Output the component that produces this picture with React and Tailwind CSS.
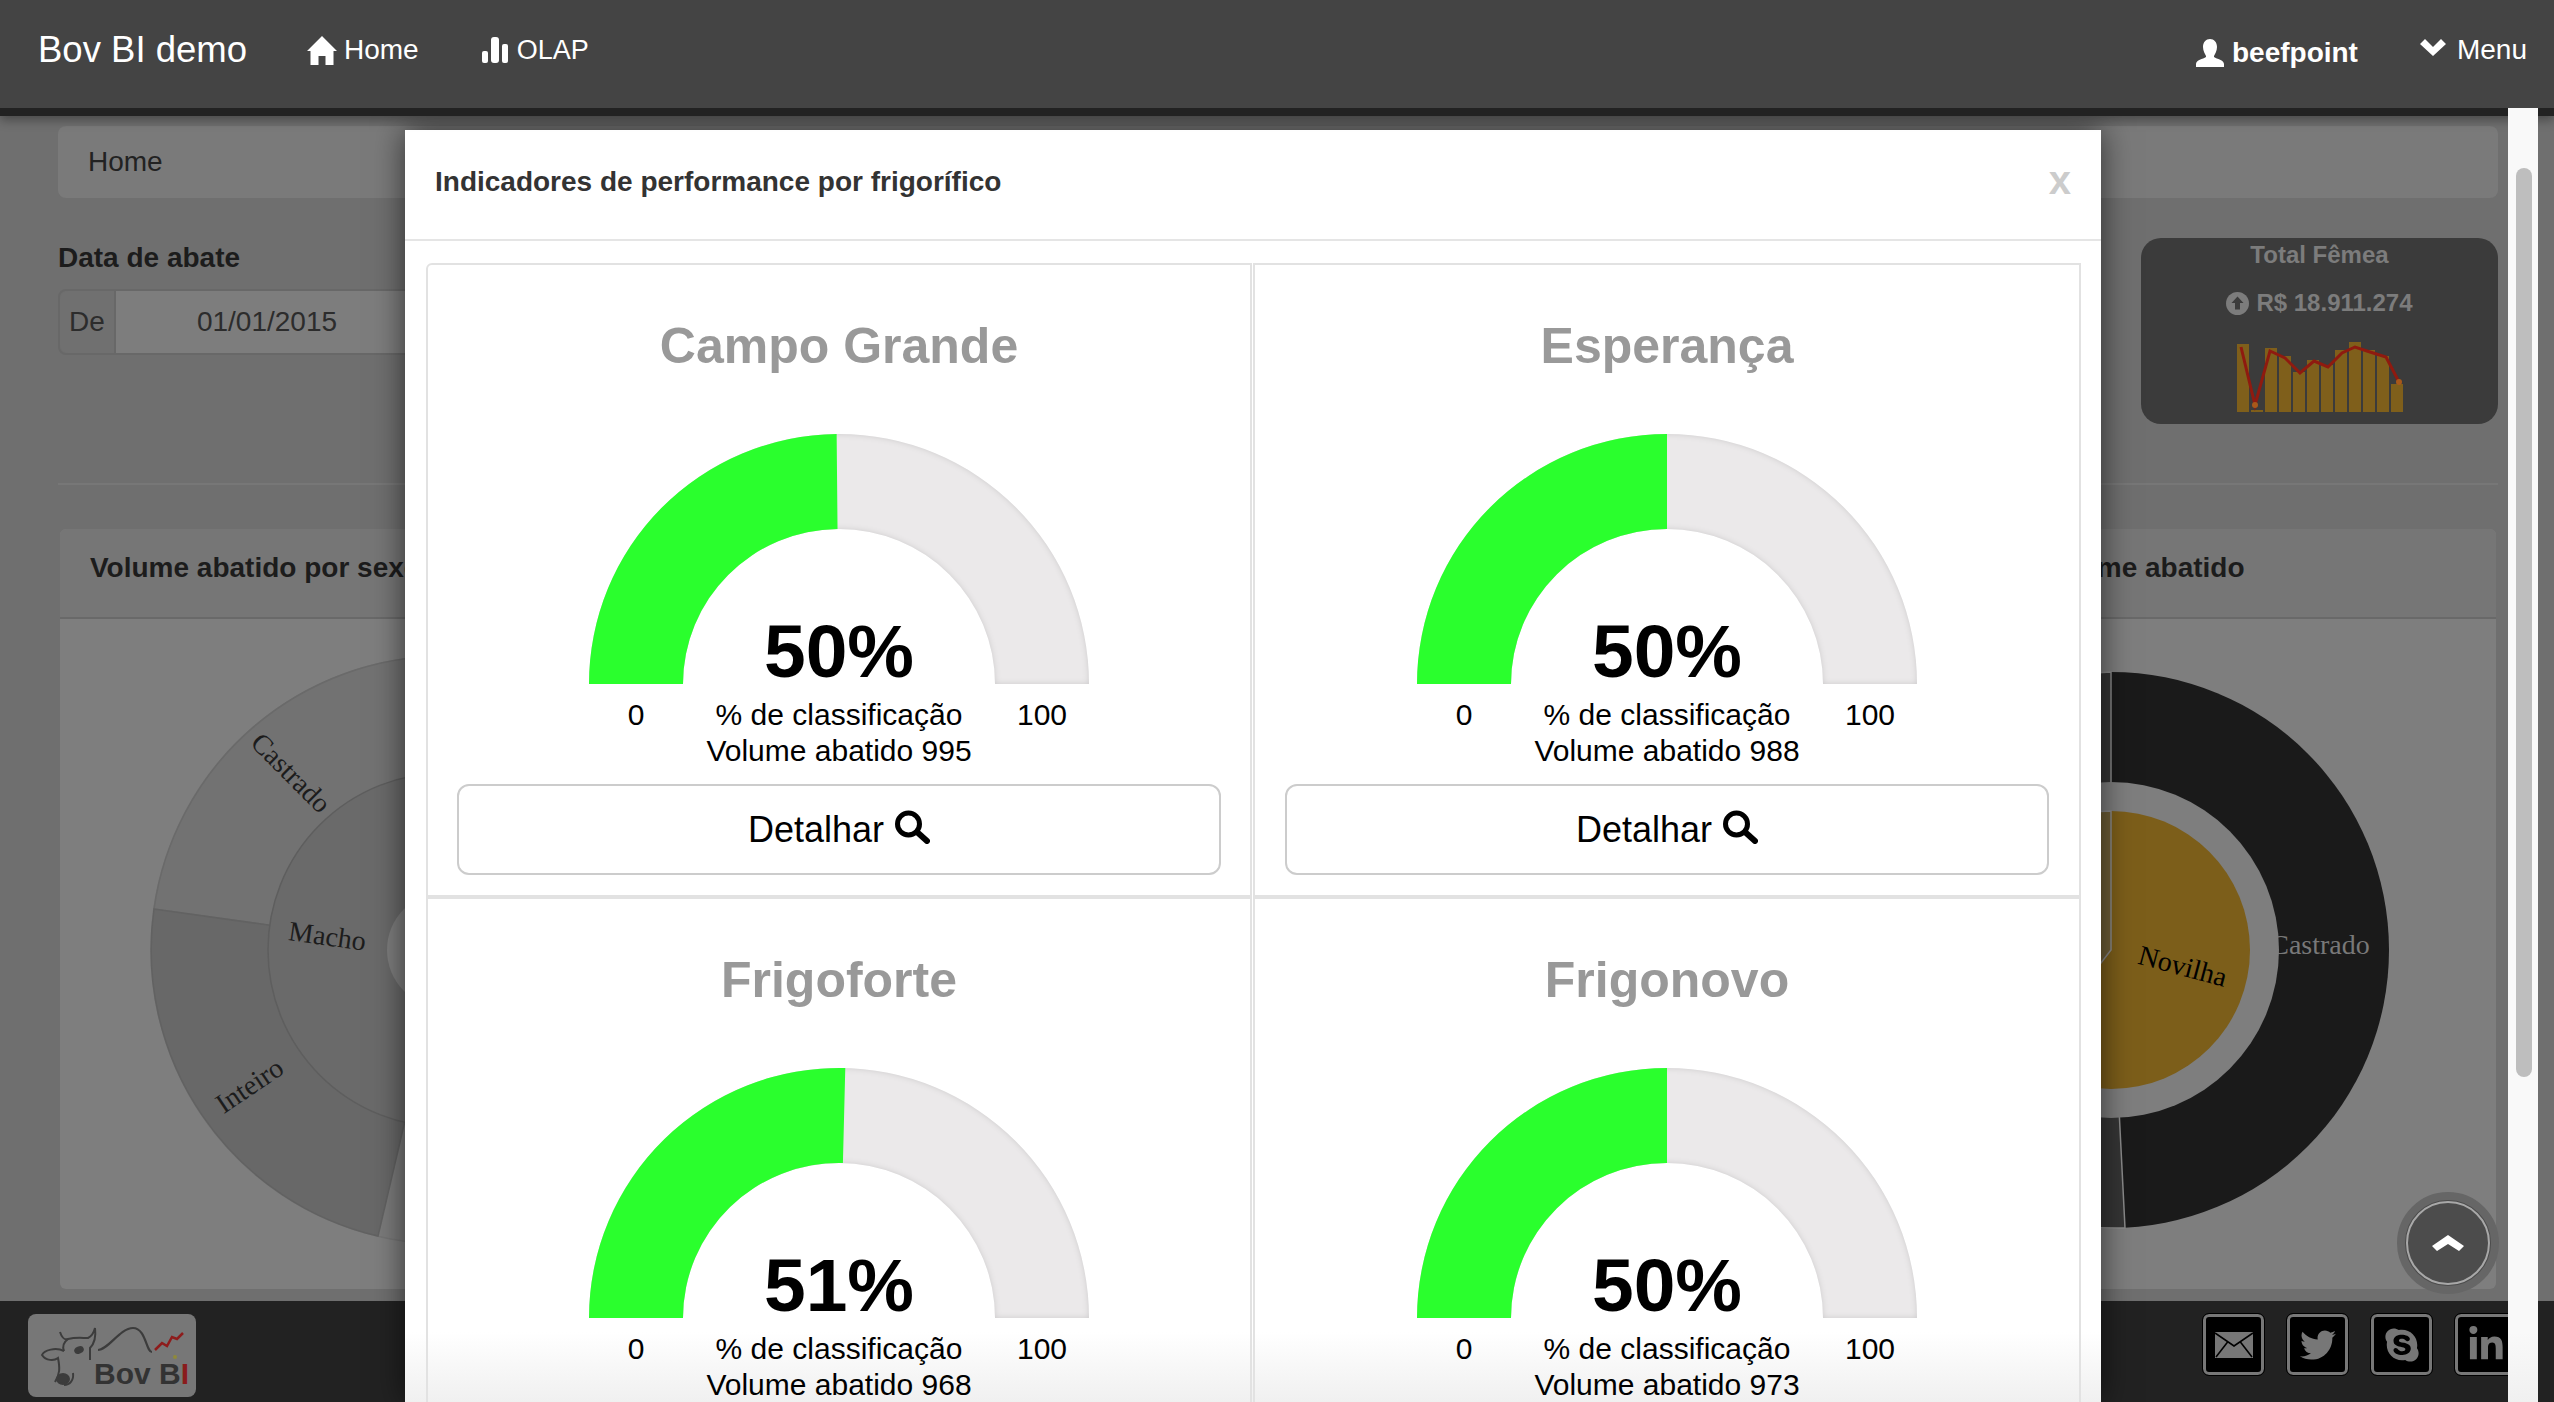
import React from 'react';
import { FaTwitter, FaSkype, FaLinkedinIn } from 'react-icons/fa';

const gauges = [
  { name: 'Campo Grande', label: '50%', value: 0.497, volume: 995 },
  { name: 'Esperança', label: '50%', value: 0.5, volume: 988 },
  { name: 'Frigoforte', label: '51%', value: 0.508, volume: 968 },
  { name: 'Frigonovo', label: '50%', value: 0.5, volume: 973 },
];

const bars = [344, 410, 348, 356, 372, 360, 365, 350, 342, 350, 356, 384];

const HomeIcon = () => (
  <svg width="30" height="29" viewBox="0 0 30 29" fill="#fff">
    <path d="M15 0L30 15L26.5 15L26.5 29L18.5 29L18.5 20L11.5 20L11.5 29L3.5 29L3.5 15L0 15Z" />
  </svg>
);

const StatsIcon = () => (
  <svg width="26" height="26" viewBox="0 0 26 26" fill="#fff">
    <rect x="0" y="14" width="6" height="12" rx="2" />
    <rect x="9" y="0" width="8" height="26" rx="3" />
    <rect x="20" y="7" width="6" height="19" rx="2" />
  </svg>
);

const UserIcon = () => (
  <svg width="28" height="28" viewBox="0 0 28 28" fill="#fff">
    <path d="M14 0c4 0 7 3 7 8 0 4-2 7-3 9v1c3 2 10 3 10 7v3H0v-3c0-4 7-5 10-7v-1c-1-2-3-5-3-9 0-5 3-8 7-8z" />
  </svg>
);

const SearchIcon = () => (
  <svg width="36" height="34" viewBox="0 0 36 34" fill="none" stroke="#000">
    <circle cx="14.5" cy="14" r="11" strokeWidth="5" />
    <path d="M23 22L33 31" strokeWidth="6" strokeLinecap="round" />
  </svg>
);

function Gauge({ id, value, label }) {
  const angle = Math.PI * (1 - value);
  const ox = 250 + 250 * Math.cos(angle);
  const oy = 250 - 250 * Math.sin(angle);
  const ix = 250 + 156 * Math.cos(angle);
  const iy = 250 - 155 * Math.sin(angle);
  return (
    <svg width="500" height="250" viewBox="0 0 500 250" className="block overflow-visible">
      <defs>
        <filter id={id} x="-5%" y="-5%" width="110%" height="110%">
          <feComponentTransfer in="SourceAlpha">
            <feFuncA type="table" tableValues="1 0" />
          </feComponentTransfer>
          <feGaussianBlur stdDeviation="3" result="blur" />
          <feFlood floodColor="#000" floodOpacity="0.28" />
          <feComposite in2="blur" operator="in" />
          <feComposite in2="SourceAlpha" operator="in" result="shadow" />
          <feMerge>
            <feMergeNode in="SourceGraphic" />
            <feMergeNode in="shadow" />
          </feMerge>
        </filter>
      </defs>
      <path filter={`url(#${id})`} fill="#ebe9ea" d="M0 250A250 250 0 0 1 500 250L406 250A156 155 0 0 0 94 250Z" />
      <path fill="#2aff2d" d={`M0 250A250 250 0 0 1 ${ox} ${oy}L${ix} ${iy}A156 155 0 0 0 94 250Z`} />
      <text x="250" y="243" textAnchor="middle" fontFamily="Liberation Sans" fontWeight="700" fontSize="75" fill="#000">
        {label}
      </text>
    </svg>
  );
}

function GaugeCard({ item, index }) {
  return (
    <div className="h-[634px] flex flex-col items-center border-2 border-[#e2e2e2] first:rounded-tl-md">
      <h3 className="mt-[51px] h-[60px] text-[50px] leading-[60px] font-bold text-[#999]">{item.name}</h3>
      <div className="mt-[58px]">
        <Gauge id={`gauge-shadow-${index}`} value={item.value} label={item.label} />
      </div>
      <div className="mt-[13px] w-[500px] flex text-[30px] leading-[36px] text-black text-center">
        <span className="w-[94px]">0</span>
        <span className="flex-1">% de classificação</span>
        <span className="w-[94px]">100</span>
      </div>
      <div className="text-[30px] leading-[36px] text-black">Volume abatido {item.volume}</div>
      <button className="mt-[15px] w-[764px] h-[91px] border-2 border-[#ccc] rounded-xl flex items-center justify-center gap-[10px] text-[36px] text-black bg-white">
        Detalhar
        <span className="-mt-[6px]"><SearchIcon /></span>
      </button>
    </div>
  );
}

function LeftChart() {
  return (
    <svg width="770" height="668" viewBox="0 0 770 668" className="block" fontFamily="Liberation Serif" fontSize="28" fill="#1c1c1c">
      <circle cx="385" cy="331" r="294" fill="#7b7b7b" stroke="#747474" strokeWidth="1.5" />
      <path d="M385 331L94 290A294 294 0 0 1 385 37Z" fill="#727272" stroke="#6a6a6a" strokeWidth="1.5" />
      <path d="M385 331L94 290A294 294 0 0 0 318 617Z" fill="#686868" stroke="#626262" strokeWidth="1.5" />
      <circle cx="385" cy="331" r="177" fill="#6a6a6a" stroke="#5e5e5e" strokeWidth="1.5" />
      <circle cx="385" cy="331" r="58" fill="#7e7e7e" />
      <text x="229" y="156" textAnchor="middle" dominantBaseline="middle" transform="rotate(45 229 156)">Castrado</text>
      <text x="267" y="320" textAnchor="middle" dominantBaseline="middle" transform="rotate(8 267 320)">Macho</text>
      <text x="191" y="469" textAnchor="middle" dominantBaseline="middle" transform="rotate(-34 191 469)">Inteiro</text>
    </svg>
  );
}

function RightChart() {
  return (
    <svg width="770" height="668" viewBox="0 0 770 668" className="block" fontFamily="Liberation Serif" fontSize="28">
      <circle cx="385" cy="331" r="278" fill="#1a1a1a" />
      <path d="M385 331L385 53A278 278 0 0 0 399 609Z" fill="#353535" stroke="#8a8a8a" strokeWidth="1.5" />
      <text x="594" y="329" textAnchor="middle" dominantBaseline="middle" fill="#787878">Castrado</text>
      <circle cx="385" cy="331" r="168" fill="#7e7e7e" />
      <circle cx="385" cy="331" r="139" fill="#7c5e1a" />
      <path d="M385 331L385 192A139 139 0 0 0 300 441Z" fill="#6f5f37" stroke="#8a8a8a" strokeWidth="1.5" />
      <text x="456" y="350" textAnchor="middle" dominantBaseline="middle" fill="#000" transform="rotate(15 456 350)">Novilha</text>
    </svg>
  );
}

function Sparkline() {
  const line = '6 5 20 63 35 9 50 16 65 31 79 19 93 25 107 11 120 5 135 10 151 15 164 40';
  return (
    <svg width="170" height="70" viewBox="0 0 170 70" className="block">
      {bars.map((top, i) => (
        <rect key={i} x={i * 14 + 2} y={top - 342} width="12" height={412 - top} fill="#7f5f1b" />
      ))}
      <polyline points={line} fill="none" stroke="#8f1a0f" strokeWidth="3" />
      <circle cx="20" cy="63" r="3" fill="#a8581a" />
      <circle cx="164" cy="40" r="3" fill="#a8581a" />
    </svg>
  );
}

function Logo() {
  return (
    <div className="w-[168px] h-[83px] rounded-lg bg-[#777] relative">
      <svg width="168" height="83" viewBox="0 0 168 83" fill="none" stroke="#3c3c3c" strokeWidth="2" className="block">
        <path d="M70 36C80 36 92 14 105 14C118 14 118 38 124 38" strokeWidth="2.2" />
        <path d="M127 36L134 29L139 32L144 23L149 25L155 19" stroke="#8e1c1c" strokeWidth="2.5" />
        <path d="M32 18C34 24 36 26 40 25C48 23 54 24 60 24C64 22 66 18 67 14C68 22 66 30 62 34L62 46" />
        <path d="M36 37C28 33 16 36 14 41C18 47 26 47 30 44C32 54 32 60 27 68" />
        <path d="M40 25C36 28 34 32 36 37M45 59C46 66 42 71 36 71" />
        <ellipse cx="35" cy="65" rx="6" ry="5" fill="#3c3c3c" />
        <ellipse cx="51" cy="36" rx="4" ry="2.5" fill="#3c3c3c" transform="rotate(-25 51 36)" />
        <circle cx="147" cy="43" r="2" fill="#8f8a3a" stroke="none" />
      </svg>
      <span className="absolute left-[66px] top-[43px] text-[30px] leading-[34px] font-bold text-[#333] whitespace-nowrap">
        Bov B<span className="text-[#8a1c1c]">I</span>
      </span>
    </div>
  );
}

function SocialBox({ children }) {
  return (
    <div className="w-[61px] h-[61px] shrink-0 rounded-md border-[3px] border-[#777] bg-black outline-1 outline-black flex items-center justify-center text-[#777] overflow-hidden">
      {children}
    </div>
  );
}

export default function App() {
  return (
    <div className="relative w-full h-[1402px] overflow-hidden flex flex-col bg-[#6f6f6f] font-['Liberation_Sans',sans-serif]">
      {/* navbar */}
      <nav className="relative z-30 h-[116px] shrink-0 border-b-8 border-[#222] bg-[#444] shadow-[0_4px_10px_rgba(0,0,0,0.35)] flex items-center pl-[38px] pr-[27px] pb-2 text-white">
        <span className="text-[36.5px] leading-none w-[207px] whitespace-nowrap">Bov BI demo</span>
        <a className="ml-[62px] flex items-center gap-[7px] text-[28px]"><HomeIcon />Home</a>
        <a className="ml-[63px] flex items-center gap-[9px] text-[27px]"><StatsIcon />OLAP</a>
        <a className="ml-auto flex items-center gap-[8px] text-[28px] font-bold mt-[5px]"><UserIcon />beefpoint</a>
        <a className="ml-[62px] flex items-center gap-[11px] text-[28px]">
          <svg width="26" height="17" viewBox="0 0 26 17" fill="#fff" className="-mt-[6px]">
            <path d="M0 5L5 0L13 8L21 0L26 5L13 17Z" />
          </svg>
          Menu
        </a>
      </nav>

      {/* page behind the dialog */}
      <main className="relative h-[1185px] shrink-0 pt-[10px] pl-[58px] pr-[56px]">
        <div className="h-[72px] rounded-lg bg-[#7a7a7a] pl-[30px] flex items-center text-[28px] text-[#222]">Home</div>

        <div className="mt-[40px] flex justify-between items-start h-[186px]">
          <div className="w-[362px]">
            <div className="text-[28px] leading-[40px] font-bold text-[#1c1c1c]">Data de abate</div>
            <div className="mt-[11px] h-[66px] flex rounded-lg border-2 border-[#686868] text-[28px] text-[#2c2c2c]">
              <span className="w-[56px] bg-[#707070] border-r-2 border-[#686868] flex items-center justify-center rounded-l-lg">De</span>
              <span className="flex-1 bg-[#7d7d7d] flex items-center justify-center rounded-r-lg">01/01/2015</span>
            </div>
          </div>
          <div className="w-[357px] h-[186px] rounded-[20px] bg-[#3b3b3b] flex flex-col items-center pt-[3px] text-[24px] leading-[28px] font-bold text-[#7c7c7c]">
            <div>Total Fêmea</div>
            <div className="mt-[20px] flex items-center gap-[7px]">
              <svg width="23" height="23" viewBox="0 0 23 23" className="block">
                <circle cx="11.5" cy="11.5" r="11.5" fill="#7c7c7c" />
                <path d="M11.5 4.5L17.5 11L14 11L14 17.5L9 17.5L9 11L5.5 11Z" fill="#3b3b3b" />
              </svg>
              R$ 18.911.274
            </div>
            <div className="mt-[25px]"><Sparkline /></div>
          </div>
        </div>

        <div className="mt-[59px] h-[2px] bg-[#777]" />

        <div className="mt-[44px] mx-[2px] grid grid-cols-3 gap-[63px]">
          <section className="h-[760px] rounded-md bg-[#7e7e7e] overflow-hidden">
            <h4 className="h-[90px] bg-[#767676] border-b-2 border-[#696969] pl-[30px] pb-[10px] flex items-center text-[28px] font-bold text-[#1c1c1c] whitespace-nowrap">Volume abatido por sexo</h4>
            <LeftChart />
          </section>
          <section className="h-[760px] rounded-md bg-[#7e7e7e]" />
          <section className="h-[760px] rounded-md bg-[#7e7e7e] overflow-hidden">
            <h4 className="h-[90px] bg-[#767676] border-b-2 border-[#696969] pl-[30px] pb-[10px] flex items-center text-[28px] font-bold text-[#1c1c1c] whitespace-nowrap">Sexo e categoria por volume abatido</h4>
            <RightChart />
          </section>
        </div>

        <button className="absolute z-10 left-[2397px] top-[1076px] w-[102px] h-[102px] rounded-full bg-[#4c4c4c] border-[8px] border-[#666] flex items-center justify-center">
          <span className="w-[84px] h-[84px] rounded-full border-2 border-[#a8a8a8] flex items-center justify-center">
            <svg width="32" height="18" viewBox="0 0 32 18" fill="#fff">
              <path d="M0 12L16 1L32 12L27 17L16 10L5 17Z" />
            </svg>
          </span>
        </button>
      </main>

      {/* footer */}
      <footer className="flex-1 bg-[#222] flex items-start pt-[13px] pl-[28px] pr-[38px]">
        <Logo />
        <div className="ml-auto flex gap-[23px]">
          <SocialBox>
            <svg width="38" height="26" viewBox="0 0 38 26">
              <rect width="38" height="26" fill="#777" />
              <path d="M0 1L19 14L38 1M1 25L13 9.5M37 25L25 9.5" fill="none" stroke="#000" strokeWidth="1.6" />
            </svg>
          </SocialBox>
          <SocialBox><FaTwitter size={36} /></SocialBox>
          <SocialBox><FaSkype size={38} /></SocialBox>
          <SocialBox><FaLinkedinIn size={38} /></SocialBox>
        </div>
      </footer>

      {/* dialog */}
      <div className="absolute z-20 left-[405px] top-[130px] bottom-0 w-[1696px] bg-white overflow-hidden shadow-[0_0_30px_rgba(0,0,0,0.6)]">
        <div className="absolute left-0 right-0 bottom-0 h-[70px] bg-gradient-to-b from-transparent to-[#f0f0f0]" />
        <div className="relative h-[111px] border-b-2 border-[#e5e5e5] px-[30px] pb-[6px] flex items-center justify-between">
          <h2 className="text-[28px] font-bold text-[#333]">Indicadores de performance por frigorífico</h2>
          <span className="text-[40px] font-bold text-[#ccc] -mt-[4px]">x</span>
        </div>
        <div className="relative pt-[22px] pl-[21px] grid grid-cols-[826px_828px] gap-x-[1px]">
          {gauges.map((item, i) => (
            <GaugeCard key={item.name} item={item} index={i} />
          ))}
        </div>
      </div>

      {/* dialog scrollbar */}
      <div className="absolute z-40 left-[2508px] top-[108px] bottom-0 w-[30px] bg-[#f9f9f9] pt-[60px] pl-[8px] overflow-hidden">
        <div className="w-[16px] h-[909px] rounded-full bg-[#bebebe]" />
        <div className="absolute left-0 right-0 bottom-0 h-[70px] bg-gradient-to-b from-transparent to-[#f0f0f0]" />
      </div>
    </div>
  );
}
